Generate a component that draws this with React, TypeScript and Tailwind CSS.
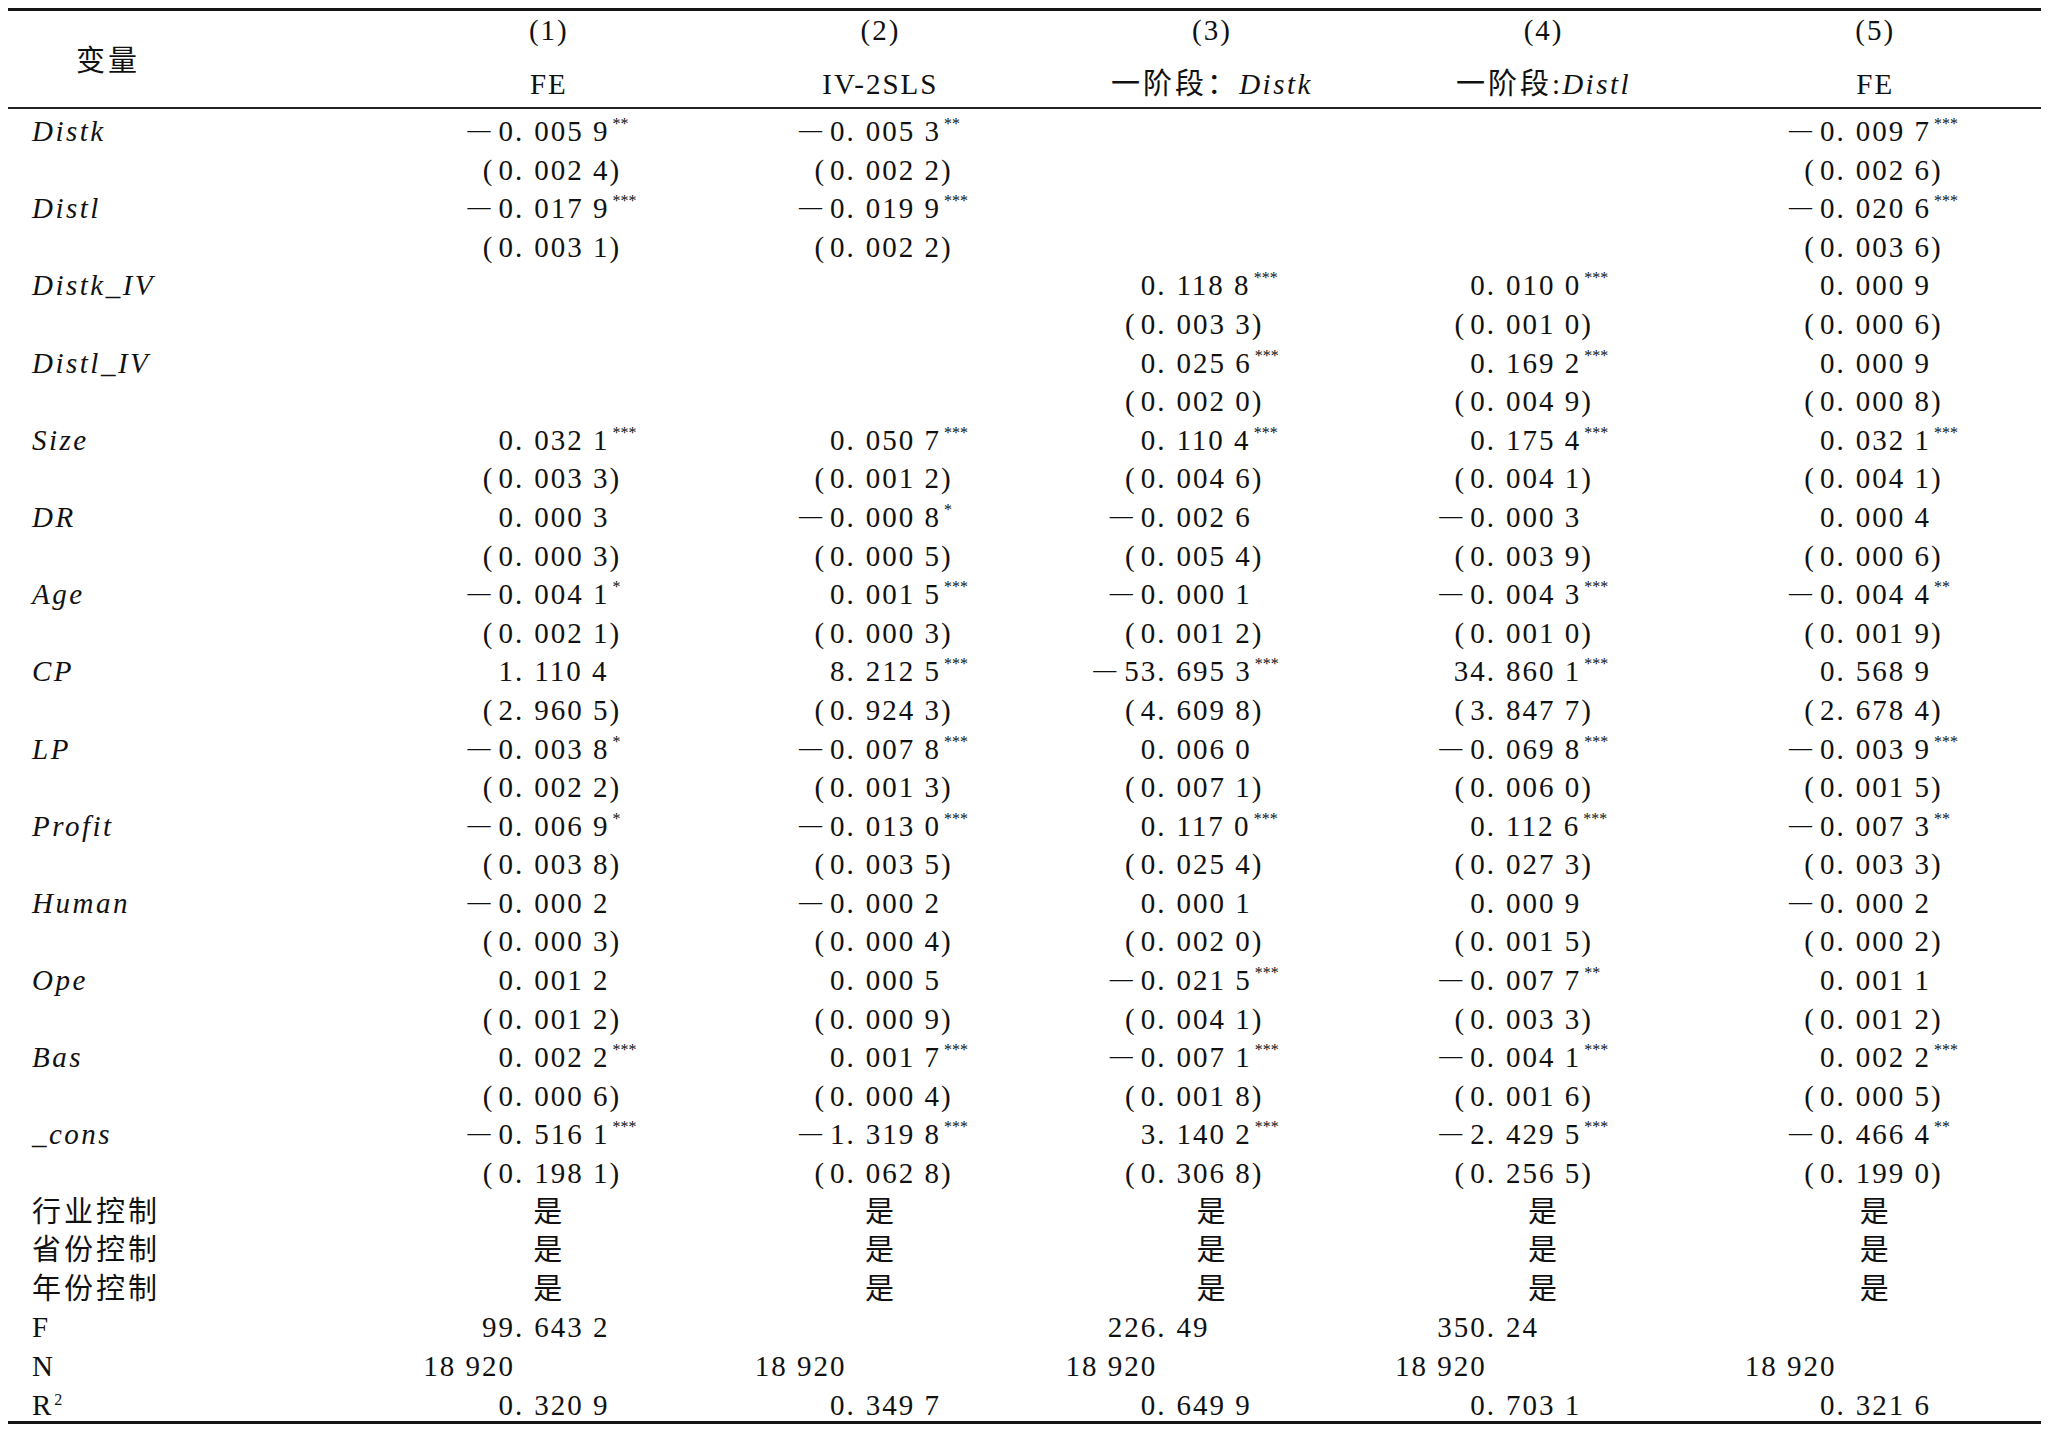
const COLW = ["w-[132px]", "w-[132px]", "w-[111px]", "w-[109px]", "w-[127px]"];

type V = { name: string; coef: (string | null)[]; se: (string | null)[] };

const vars: V[] = [
  { name: "Distk", coef: ["-0.005 9**", "-0.005 3**", null, null, "-0.009 7***"], se: ["(0.002 4)", "(0.002 2)", null, null, "(0.002 6)"] },
  { name: "Distl", coef: ["-0.017 9***", "-0.019 9***", null, null, "-0.020 6***"], se: ["(0.003 1)", "(0.002 2)", null, null, "(0.003 6)"] },
  { name: "Distk_IV", coef: [null, null, "0.118 8***", "0.010 0***", "0.000 9"], se: [null, null, "(0.003 3)", "(0.001 0)", "(0.000 6)"] },
  { name: "Distl_IV", coef: [null, null, "0.025 6***", "0.169 2***", "0.000 9"], se: [null, null, "(0.002 0)", "(0.004 9)", "(0.000 8)"] },
  { name: "Size", coef: ["0.032 1***", "0.050 7***", "0.110 4***", "0.175 4***", "0.032 1***"], se: ["(0.003 3)", "(0.001 2)", "(0.004 6)", "(0.004 1)", "(0.004 1)"] },
  { name: "DR", coef: ["0.000 3", "-0.000 8*", "-0.002 6", "-0.000 3", "0.000 4"], se: ["(0.000 3)", "(0.000 5)", "(0.005 4)", "(0.003 9)", "(0.000 6)"] },
  { name: "Age", coef: ["-0.004 1*", "0.001 5***", "-0.000 1", "-0.004 3***", "-0.004 4**"], se: ["(0.002 1)", "(0.000 3)", "(0.001 2)", "(0.001 0)", "(0.001 9)"] },
  { name: "CP", coef: ["1.110 4", "8.212 5***", "-53.695 3***", "34.860 1***", "0.568 9"], se: ["(2.960 5)", "(0.924 3)", "(4.609 8)", "(3.847 7)", "(2.678 4)"] },
  { name: "LP", coef: ["-0.003 8*", "-0.007 8***", "0.006 0", "-0.069 8***", "-0.003 9***"], se: ["(0.002 2)", "(0.001 3)", "(0.007 1)", "(0.006 0)", "(0.001 5)"] },
  { name: "Profit", coef: ["-0.006 9*", "-0.013 0***", "0.117 0***", "0.112 6***", "-0.007 3**"], se: ["(0.003 8)", "(0.003 5)", "(0.025 4)", "(0.027 3)", "(0.003 3)"] },
  { name: "Human", coef: ["-0.000 2", "-0.000 2", "0.000 1", "0.000 9", "-0.000 2"], se: ["(0.000 3)", "(0.000 4)", "(0.002 0)", "(0.001 5)", "(0.000 2)"] },
  { name: "Ope", coef: ["0.001 2", "0.000 5", "-0.021 5***", "-0.007 7**", "0.001 1"], se: ["(0.001 2)", "(0.000 9)", "(0.004 1)", "(0.003 3)", "(0.001 2)"] },
  { name: "Bas", coef: ["0.002 2***", "0.001 7***", "-0.007 1***", "-0.004 1***", "0.002 2***"], se: ["(0.000 6)", "(0.000 4)", "(0.001 8)", "(0.001 6)", "(0.000 5)"] },
  { name: "_cons", coef: ["-0.516 1***", "-1.319 8***", "3.140 2***", "-2.429 5***", "-0.466 4**"], se: ["(0.198 1)", "(0.062 8)", "(0.306 8)", "(0.256 5)", "(0.199 0)"] },
];

const stats: { label: React.ReactNode; cells: (string | null)[] }[] = [
  { label: "F", cells: ["99.643 2", null, "226.49", "350.24", null] },
  { label: "N", cells: ["18 920", "18 920", "18 920", "18 920", "18 920"] },
  {
    label: (
      <>
        R<span className="relative -top-[10px] ml-[1px] text-[16px] tracking-normal">2</span>
      </>
    ),
    cells: ["0.320 9", "0.349 7", "0.649 9", "0.703 1", "0.321 6"],
  },
];

const headers: { num: string; name: React.ReactNode }[] = [
  { num: "(1)", name: "FE" },
  { num: "(2)", name: "IV-2SLS" },
  {
    num: "(3)",
    name: (
      <>
        <span className="tracking-[3px]">一阶段：</span>
        <i className="tracking-[2.5px]">Distk</i>
      </>
    ),
  },
  {
    num: "(4)",
    name: (
      <>
        <span className="tracking-[3px]">一阶段</span>:<i className="tracking-[2.5px]">Distl</i>
      </>
    ),
  },
  { num: "(5)", name: "FE" },
];

function Num({ v, w }: { v: string; w: string }) {
  const stars = v.match(/\*+$/)?.[0] ?? "";
  let s = v.slice(0, v.length - stars.length);
  const neg = s.startsWith("-");
  if (neg) s = s.slice(1);
  const open = s.startsWith("(");
  const close = s.endsWith(")");
  if (open) s = s.slice(1);
  if (close) s = s.slice(0, -1);
  const [int, frac] = s.split(".");
  return (
    <>
      <span className={`inline-block text-right ${w}`}>
        {neg && <span className="relative -top-[4px] mr-[6px] text-[23px] tracking-[2px]">—</span>}
        {open && <span className="mr-[4px]">(</span>}
        {int}
      </span>
      {frac !== undefined && (
        <>
          <span className="mr-[10px]">.</span>
          {frac}
        </>
      )}
      {close && ")"}
      {stars && (
        <span className="relative -top-[12px] ml-[3px] text-[16px] tracking-normal">{stars}</span>
      )}
    </>
  );
}

const rowCls =
  "grid grid-cols-[375px_repeat(5,331.6px)] h-[38.6px] pt-[7px] leading-[30px]";

function DataRow({ label, cells }: { label: React.ReactNode; cells: (string | null)[] }) {
  return (
    <div className={rowCls}>
      <div className="pl-[24px] whitespace-nowrap">{label}</div>
      {cells.map((c, i) => (
        <div key={i} className="whitespace-nowrap">
          {c && <Num v={c} w={COLW[i]} />}
        </div>
      ))}
    </div>
  );
}

function YesRow({ label }: { label: string }) {
  return (
    <div className={rowCls}>
      <div className="pl-[24px] tracking-[3px]">{label}</div>
      {[0, 1, 2, 3, 4].map((i) => (
        <div key={i} className="text-center">
          是
        </div>
      ))}
    </div>
  );
}

export default function App() {
  return (
    <div className="min-h-screen bg-white text-[#111] font-[family-name:Liberation_Serif,Noto_Sans_CJK_SC,serif] text-[29px] tracking-[2px]">
      <div className="ml-[8px] w-[2033px] pt-[8px]">
        <div className="h-[3px] bg-[#151515]" />
        <div className="grid grid-cols-[375px_repeat(5,331.6px)] h-[96px] leading-[30px]">
          <div className="pl-[68px] pt-[35px] tracking-[3px]">变量</div>
          {headers.map((h) => (
            <div key={h.num} className="flex flex-col items-center pt-[4px]">
              <div className="h-[30px]">{h.num}</div>
              <div className="mt-[24px] h-[30px] whitespace-nowrap">{h.name}</div>
            </div>
          ))}
        </div>
        <div className="h-[2px] bg-[#222]" />
        {vars.map((v) => (
          <div key={v.name}>
            <DataRow label={<i className="tracking-[2.5px]">{v.name}</i>} cells={v.coef} />
            <DataRow label="" cells={v.se} />
          </div>
        ))}
        <YesRow label="行业控制" />
        <YesRow label="省份控制" />
        <YesRow label="年份控制" />
        {stats.map((r, i) => (
          <DataRow key={i} label={r.label} cells={r.cells} />
        ))}
        <div className="h-[3px] bg-[#151515]" />
      </div>
    </div>
  );
}
